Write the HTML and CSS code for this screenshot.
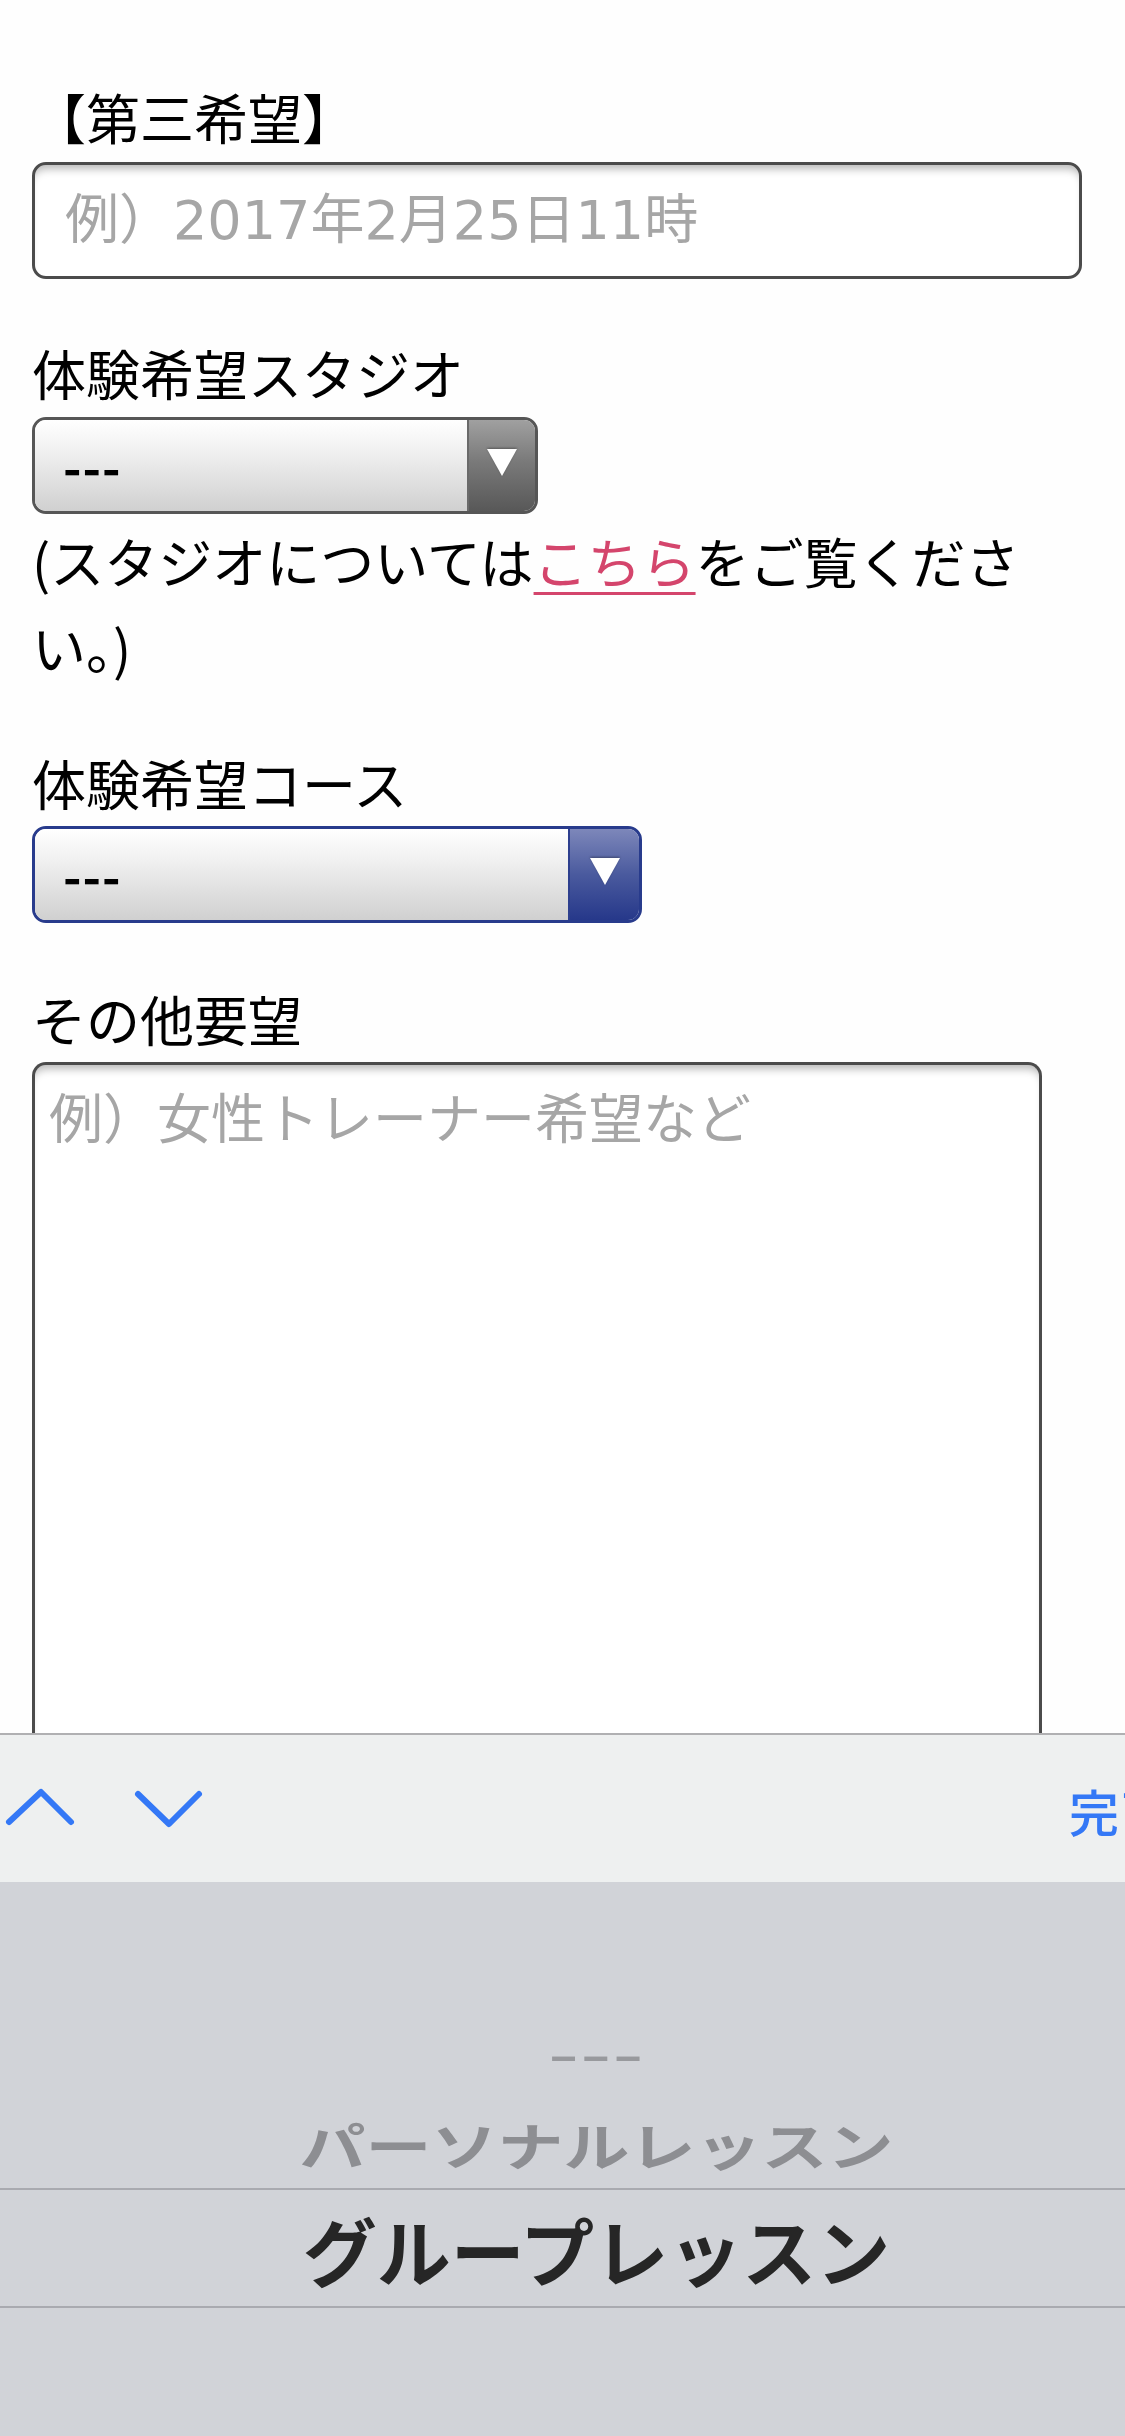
FILE: index.html
```html
<!DOCTYPE html>
<html lang="ja">
<head>
<meta charset="utf-8">
<title>体験予約フォーム</title>
<link rel="stylesheet" href="styles.css">
</head>
<body>
<div class="screen">
  <main class="form">
    <h2 class="heading">【第三希望】</h2>
    <input class="text-input" type="text" placeholder="例）2017年2月25日11時">

    <label class="label label-studio">体験希望スタジオ</label>
    <div class="select select-gray">
      <div class="select-value">---</div>
      <div class="select-btn"><span class="tri"></span></div>
    </div>
    <p class="note">(スタジオについては<a class="link" href="#">こちら</a>をご覧ください。)</p>

    <label class="label label-course">体験希望コース</label>
    <div class="select select-blue">
      <div class="select-value">---</div>
      <div class="select-btn"><span class="tri"></span></div>
    </div>

    <label class="label label-other">その他要望</label>
    <textarea class="textarea" placeholder="例）女性トレーナー希望など"></textarea>
  </main>

  <div class="toolbar">
    <svg class="chev" width="80" height="44" viewBox="0 0 80 44"><path d="M9 35 L41 5 L71 35" fill="none" stroke="#3478f6" stroke-width="6" stroke-linecap="round" stroke-linejoin="round"/></svg>
    <svg class="chev" width="80" height="44" viewBox="0 0 80 44"><path d="M8 7 L39 37 L69 7" fill="none" stroke="#3478f6" stroke-width="6" stroke-linecap="round" stroke-linejoin="round"/></svg>
    <span class="done">完了</span>
  </div>

  <div class="picker">
    <div class="row row-dash"><span>---</span></div>
    <div class="row row-personal"><span>パーソナルレッスン</span></div>
    <div class="row row-selected"><span>グループレッスン</span></div>
  </div>
</div>
</body>
</html>
```

FILE: styles.css
```css
* { box-sizing: border-box; }
html, body {
  margin: 0;
  padding: 0;
  background: #fefefe;
}
body {
  font-family: "Noto Sans CJK JP", "Noto Sans", sans-serif;
  color: #000;
}
.screen {
  width: 1125px;
  height: 2436px;
  display: flex;
  flex-direction: column;
  overflow: hidden;
}
.form {
  height: 1733px;
  flex: none;
  overflow: hidden;
  padding: 74px 0 0 32px;
  font-size: 54px;
  line-height: 86.4px;
}
.heading {
  margin: 0;
  font-size: 54px;
  font-weight: 400;
  line-height: 86.4px;
}
.text-input {
  display: block;
  width: 1050px;
  height: 117px;
  margin: 2px 0 0;
  border: 3px solid #4b4b4b;
  border-radius: 14px;
  padding: 0 30px;
  font-family: "DejaVu Sans", "Noto Sans CJK JP", sans-serif;
  font-size: 54px;
  background: #fff;
  box-shadow: inset 0 9px 8px -5px rgba(0,0,0,0.28);
  outline: none;
}
.text-input::placeholder,
.textarea::placeholder {
  color: #a6a6a6;
}
.label {
  display: block;
  font-size: 54px;
  line-height: 86.4px;
}
.label-studio { margin-top: 51px; }
.label-course { margin-top: 49px; }
.label-other { margin-top: 53px; }

.select {
  display: flex;
  height: 97px;
  border-radius: 14px;
  border: 3px solid #555;
  overflow: hidden;
}
.select-gray { width: 506px; border-color: #565656; }
.select-blue { width: 610px; border-color: #283b8c; }
.select-value {
  flex: 1;
  display: flex;
  align-items: center;
  padding: 0 0 0 28px;
  font-size: 50px;
  font-weight: 700;
  letter-spacing: 1px;
  background: linear-gradient(#ffffff, #f0f0f0 35%, #d0d0d0);
}
.select-btn {
  flex: none;
  display: flex;
  align-items: center;
  justify-content: center;
  padding-bottom: 6px;
}
.select-gray .select-btn {
  width: 68px;
  border-left: 2px solid #6a6a6a;
  background: linear-gradient(#a0a0a0, #7a7a7a 45%, #585858);
}
.select-blue .select-btn {
  width: 71px;
  border-left: 2px solid #2d3f8e;
  background: linear-gradient(#7d87ba, #4a5a9e 50%, #26388a);
}
.tri {
  width: 0;
  height: 0;
  border-left: 15px solid transparent;
  border-right: 15px solid transparent;
  border-top: 27px solid #fff;
  filter: drop-shadow(0 -1px 1px rgba(0,0,0,0.35));
}
.note {
  margin: 4px 0 0;
  width: 1050px;
  font-size: 54px;
  line-height: 86.4px;
}
.link {
  color: #d4456c;
  text-decoration: underline;
  text-decoration-thickness: 3px;
  text-underline-offset: 8px;
}
.textarea {
  display: block;
  width: 1010px;
  height: 900px;
  margin: 0;
  border: 3px solid #4b4b4b;
  border-bottom: none;
  border-radius: 14px 14px 0 0;
  padding: 8px 14px;
  font-family: inherit;
  font-size: 54px;
  line-height: 86.4px;
  background: #fff;
  box-shadow: inset 0 9px 8px -5px rgba(0,0,0,0.28);
  resize: none;
  outline: none;
}

.toolbar {
  flex: none;
  height: 149px;
  display: flex;
  align-items: center;
  gap: 50px;
  background: #eef0f0;
  border-top: 2px solid #b0b0b2;
  overflow: hidden;
}
.chev { flex: none; display: block; }
.done {
  margin-left: auto;
  margin-right: -44px;
  flex: none;
  width: 100px;
  white-space: nowrap;
  font-size: 50px;
  font-weight: 500;
  color: #3478f6;
  padding-top: 2px;
}

.picker {
  flex: 1;
  background: #d1d3d8;
  padding-top: 125px;
}
.row {
  display: flex;
  align-items: center;
  justify-content: center;
  padding-left: 68px;
  font-weight: 700;
  white-space: nowrap;
}
.row span { display: block; }
.row-dash {
  height: 90px;
  font-size: 70px;
  color: #98999d;
}
.row-dash span {
  transform: scale(1.2, 0.6);
  letter-spacing: 1px;
}
.row-personal {
  height: 91px;
  font-size: 66px;
  color: #8d8e92;
}
.row-personal span { transform: scaleY(0.78); }
.row-selected {
  height: 120px;
  border-top: 2px solid #a9aab0;
  border-bottom: 2px solid #a9aab0;
  font-size: 74px;
  color: #262626;
}
```
